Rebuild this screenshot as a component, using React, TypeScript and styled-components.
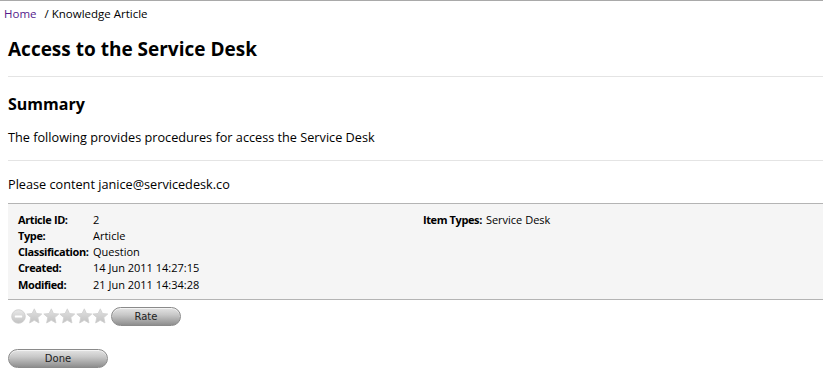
import styled, { createGlobalStyle } from "styled-components"

const GlobalStyle = createGlobalStyle`
    body {
        margin: 0;
        background: #ffffff;
        color: #000000;
        font-family: "Open Sans", "Liberation Sans", sans-serif;
    }
`

const Page = styled.div`
    border-top: 1px solid #a9a9a9;
    min-height: 385px;
`

const Breadcrumb = styled.div`
    font-size: 11.5px;
    padding: 5px 4px 0;
    height: 18px;
    line-height: 16px;
    display: flex;
    gap: 8px;
`

const CrumbLink = styled.a`
    color: #551a8b;
    text-decoration: none;
`

const Content = styled.div`
    padding-left: 8px;
`

const Title = styled.h1`
    font-size: 19px;
    font-weight: bold;
    margin: 0;
    padding: 14px 0 0;
    height: 38px;
    line-height: 22px;
`

const Divider = styled.hr`
    border: 0;
    border-top: 1px solid #e4e4e4;
    margin: 0;
`

const SectionTitle = styled.h2`
    font-size: 16px;
    font-weight: bold;
    margin: 0;
    padding: 17px 0 0;
    line-height: 20px;
`

const Paragraph = styled.p<{ $top: number; $bottom: number }>`
    font-size: 12.7px;
    margin: 0;
    line-height: 16px;
    padding: ${p => p.$top}px 0 ${p => p.$bottom}px;
`

const DetailsBox = styled.div`
    background: #f5f5f5;
    border-top: 1px solid #b4b4b4;
    border-bottom: 1px solid #b4b4b4;
    padding: 7px 0 7px 10px;
    display: grid;
    grid-template-columns: 405px 1fr;
    font-size: 11px;
`

const FieldList = styled.div`
    display: grid;
    grid-template-columns: 75px 1fr;
    grid-auto-rows: 16.25px;
    align-items: center;
    white-space: nowrap;
`

const FieldLabel = styled.span`
    font-weight: bold;
    letter-spacing: -0.4px;
`

const FieldValue = styled.span``

const InlineField = styled.div`
    height: 16.25px;
    display: flex;
    align-items: center;
    gap: 4px;
`

const RatingRow = styled.div`
    display: flex;
    align-items: center;
    padding: 6px 0 0 11px;
    height: 20px;
`

const Stars = styled.div`
    display: flex;
    align-items: center;
`

const PillButton = styled.button<{ $width: number }>`
    width: ${p => p.$width}px;
    height: 19px;
    border-radius: 10px;
    border: 1px solid #8a8a8a;
    background: linear-gradient(#e4e4e4 0%, #c8c8c8 40%, #8e8e8e 100%);
    box-shadow: inset 0 1px 0 rgba(255, 255, 255, 0.6);
    font-family: "DejaVu Sans", sans-serif;
    font-size: 10px;
    color: #222;
    padding: 0;
    line-height: 17px;
    cursor: pointer;
`

const RateButton = styled(PillButton)`
    margin-left: 2px;
`

const Footer = styled.div`
    padding: 19px 0 0 8px;
`

const MinusIcon = () => (
    <svg width="15" height="15" viewBox="0 0 15 15">
        <defs>
            <linearGradient id="mg" x1="0" y1="0" x2="0" y2="1">
                <stop offset="0" stopColor="#e8e8e8" />
                <stop offset="1" stopColor="#c2c2c2" />
            </linearGradient>
        </defs>
        <circle cx="7.5" cy="7.5" r="6.8" fill="url(#mg)" stroke="#cacaca" strokeWidth="0.8" />
        <rect x="3.8" y="6.6" width="7.4" height="1.9" rx="0.5" fill="#ffffff" />
    </svg>
)

const Star = () => (
    <svg width="16.6" height="16" viewBox="0 0 16 15">
        <defs>
            <linearGradient id="sg" x1="0" y1="0" x2="0" y2="1">
                <stop offset="0" stopColor="#e2e2e2" />
                <stop offset="1" stopColor="#c2c2c2" />
            </linearGradient>
        </defs>
        <path
            d="M8 0.6 L10.1 5.1 L15.2 5.6 L11.4 9 L12.5 14.2 L8 11.6 L3.5 14.2 L4.6 9 L0.8 5.6 L5.9 5.1 Z"
            fill="url(#sg)"
            stroke="#d0d0d0"
            strokeWidth="0.8"
            strokeLinejoin="round"
        />
    </svg>
)

const fields = [
    ["Article ID:", "2"],
    ["Type:", "Article"],
    ["Classification:", "Question"],
    ["Created:", "14 Jun 2011 14:27:15"],
    ["Modified:", "21 Jun 2011 14:34:28"],
]

export default function App() {
    return (
        <Page>
            <GlobalStyle />
            <Breadcrumb>
                <CrumbLink href="#">Home</CrumbLink>
                <span>/ Knowledge Article</span>
            </Breadcrumb>
            <Content>
                <Title>Access to the Service Desk</Title>
                <Divider />
                <SectionTitle>Summary</SectionTitle>
                <Paragraph $top={15} $bottom={15}>
                    The following provides procedures for access the Service Desk
                </Paragraph>
                <Divider />
                <Paragraph $top={15} $bottom={11}>Please content janice@servicedesk.co</Paragraph>
            </Content>
            <Content>
                <DetailsBox>
                    <FieldList>
                        {fields.map(([label, value]) => (
                            <>
                                <FieldLabel key={label}>{label}</FieldLabel>
                                <FieldValue key={label + "v"}>{value}</FieldValue>
                            </>
                        ))}
                    </FieldList>
                    <div>
                        <InlineField>
                            <FieldLabel>Item Types:</FieldLabel>
                            <FieldValue>Service Desk</FieldValue>
                        </InlineField>
                    </div>
                </DetailsBox>
            </Content>
            <RatingRow>
                <Stars>
                    <MinusIcon />
                    <Star />
                    <Star />
                    <Star />
                    <Star />
                    <Star />
                </Stars>
                <RateButton $width={70}>Rate</RateButton>
            </RatingRow>
            <Footer>
                <PillButton $width={100}>Done</PillButton>
            </Footer>
        </Page>
    )
}
